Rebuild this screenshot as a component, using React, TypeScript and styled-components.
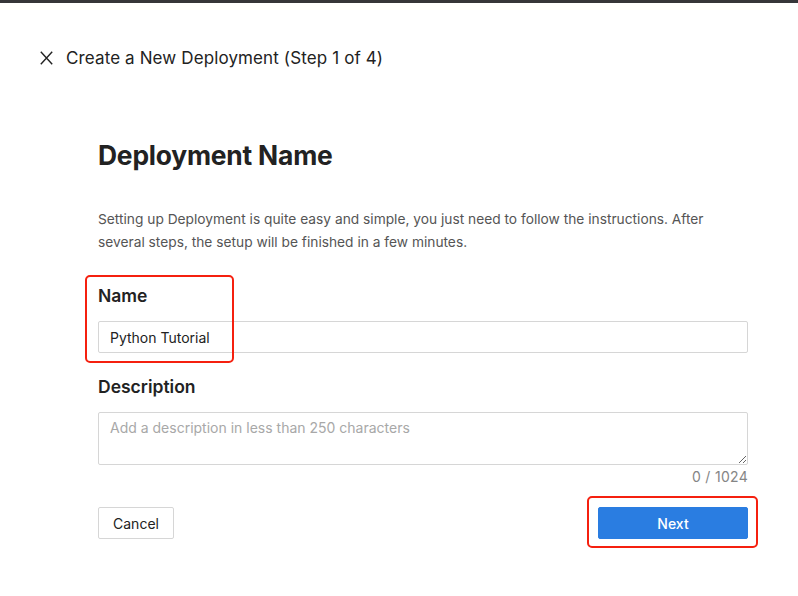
import React from "react";
import styled, { createGlobalStyle } from "styled-components";

const Global = createGlobalStyle`
  html, body { margin: 0; padding: 0; background: #fff; }
  body { font-family: Inter, "Noto Sans", "Liberation Sans", sans-serif; color: #222; }
  * { box-sizing: border-box; }
`;

const TopBar = styled.div`
  height: 3px;
  background: #36363a;
`;

const Header = styled.header`
  display: flex;
  align-items: center;
  gap: 13px;
  height: 30px;
  margin-top: 40px;
  padding-left: 40px;
`;

const CloseButton = styled.button`
  display: flex;
  align-items: center;
  justify-content: center;
  width: 13px;
  height: 14px;
  padding: 0;
  border: 0;
  background: none;
  color: #222;
  cursor: pointer;
`;

const Title = styled.h1`
  margin: 0;
  font-size: 17px;
  font-weight: 400;
  color: #222;
  letter-spacing: 0.12px;
`;

const Content = styled.main`
  width: 650px;
  margin: 66px 0 0 98px;
  padding-bottom: 48px;
  display: flex;
  flex-direction: column;
`;

const Heading = styled.h2`
  margin: 0;
  font-size: 26.4px;
  line-height: 32px;
  font-weight: 700;
  color: #222;
  letter-spacing: -0.2px;
`;

const Intro = styled.p`
  margin: 37px 0 0;
  font-size: 13.75px;
  line-height: 23px;
  color: #555;
`;

const Field = styled.div<{ $top: number }>`
  position: relative;
  display: flex;
  flex-direction: column;
  margin-top: ${(p) => p.$top}px;
`;

const Label = styled.label`
  font-size: 17.5px;
  line-height: 24px;
  font-weight: 600;
  color: #222;
  margin-bottom: 13px;
`;

const Input = styled.input`
  height: 32px;
  width: 100%;
  border: 1px solid #d6d6d6;
  border-radius: 2px;
  padding: 0 11px;
  font: inherit;
  font-size: 14px;
  color: #222;
  outline: none;
`;

const TextArea = styled.textarea`
  height: 53px;
  width: 100%;
  border: 1px solid #d6d6d6;
  border-radius: 2px;
  padding: 6px 11px;
  font: inherit;
  font-size: 14px;
  color: #222;
  outline: none;
  resize: vertical;
  &::placeholder { color: #a8a8a8; }
`;

const Counter = styled.div`
  align-self: flex-end;
  margin-top: 3px;
  font-size: 14px;
  line-height: 18px;
  letter-spacing: 0.3px;
  color: #858585;
`;

const Highlight = styled.div<{ $l: number; $t: number; $w: number; $h: number }>`
  position: absolute;
  left: ${(p) => p.$l}px;
  top: ${(p) => p.$t}px;
  width: ${(p) => p.$w}px;
  height: ${(p) => p.$h}px;
  border: 2.5px solid #f5200f;
  border-radius: 5px;
  pointer-events: none;
`;

const Actions = styled.div`
  display: flex;
  justify-content: space-between;
  align-items: center;
  margin-top: 21px;
`;

const NextWrap = styled.div`
  position: relative;
  display: flex;
`;

const Button = styled.button<{ $primary?: boolean }>`
  height: 32px;
  border-radius: 2px;
  font: inherit;
  font-size: 14px;
  cursor: pointer;
  ${(p) =>
    p.$primary
      ? `width: 150px; background: #2a7de1; border: 1px solid #2a7de1; color: #fff; font-weight: 500;`
      : `width: 76px; background: #fff; border: 1px solid #d6d6d6; color: #222;`}
`;

export default function App() {
  return (
    <>
      <Global />
      <TopBar />
      <Header>
        <CloseButton aria-label="Close">
          <svg width="13" height="14" viewBox="0 0 13 14">
            <path d="M0.8 0.8L12.2 13.2M12.2 0.8L0.8 13.2" stroke="#222" strokeWidth="1.4" fill="none" />
          </svg>
        </CloseButton>
        <Title>Create a New Deployment (Step 1 of 4)</Title>
      </Header>
      <Content>
        <Heading>Deployment Name</Heading>
        <Intro>
          Setting up Deployment is quite easy and simple, you just need to follow the instructions. After
          several steps, the setup will be finished in a few minutes.
        </Intro>
        <Field $top={30}>
          <Highlight $l={-13} $t={-9} $w={149} $h={88} />
          <Label>Name</Label>
          <Input defaultValue="Python Tutorial" />
        </Field>
        <Field $top={22}>
          <Label>Description</Label>
          <TextArea placeholder="Add a description in less than 250 characters" />
          <Counter>0 / 1024</Counter>
        </Field>
        <Actions>
          <Button>Cancel</Button>
          <NextWrap>
            <Highlight $l={-11} $t={-11} $w={171} $h={52} />
            <Button $primary>Next</Button>
          </NextWrap>
        </Actions>
      </Content>
    </>
  );
}
